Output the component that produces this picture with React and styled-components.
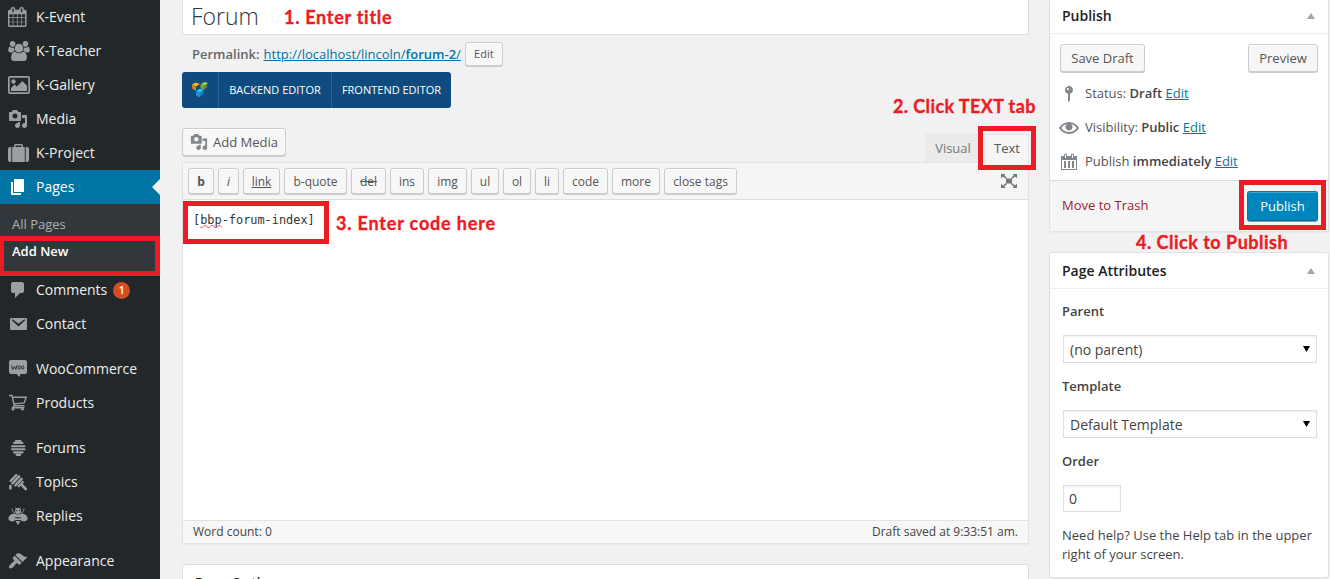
import React from 'react';
import styled, { createGlobalStyle, css } from 'styled-components';

const Global = createGlobalStyle`
  *, *::before, *::after { box-sizing: border-box; }
  html, body { margin: 0; padding: 0; background: #f1f1f1; }
  body { font: 13px/19px "Open Sans", "Noto Sans", sans-serif; color: #444; overflow: hidden; }
  p, h2, h3, ul { margin: 0; padding: 0; }
  ul { list-style: none; }
  a { color: #0074a2; }
  strong { font-weight: 600; }
`;

const Page = styled.div`
  position: relative;
  display: flex;
  width: 1330px;
  height: 579px;
  overflow: hidden;
  background: #f1f1f1;
`;

/* ---------- sidebar ---------- */
const Sidebar = styled.nav`
  flex: none;
  width: 160px;
  height: 579px;
  background: #222729;
`;
const MenuItem = styled.li`
  position: relative;
  display: flex;
  align-items: center;
  height: 34px;
  margin-top: ${p => (p.$gap ? 11 : 0)}px;
  padding-left: 8px;
  font-size: 14px;
  color: #eee;
  background: ${p => (p.$active ? '#0074a2' : 'transparent')};
  ${p => p.$active && css`
    color: #fff;
    &::after {
      content: '';
      position: absolute;
      right: 0;
      top: 9px;
      border: 8px solid transparent;
      border-left: 0;
      border-right-color: #f1f1f1;
    }
  `}
`;
const MenuLabel = styled.span`
  padding-bottom: 2px;
`;
const MenuIcon = styled.span`
  display: flex;
  align-items: center;
  width: 28px;
  color: ${p => (p.$active ? '#fff' : '#9b9fa3')};
  svg { display: block; }
`;
const Bubble = styled.span`
  width: 17px;
  height: 17px;
  margin-left: 6px;
  border-radius: 9px;
  background: #d54e21;
  color: #fff;
  font-size: 10.5px;
  font-weight: 600;
  line-height: 17px;
  text-align: center;
`;
const SubMenu = styled.ul`
  height: 69px;
  padding: 7px 12px 0;
  background: #32373b;
`;
const SubItem = styled.li`
  height: 27px;
  line-height: 26px;
  font-size: 13px;
  color: ${p => (p.$current ? '#fff' : '#aeb1b3')};
  font-weight: ${p => (p.$current ? 600 : 400)};
`;

/* ---------- shared ---------- */
const Button = styled.button`
  display: inline-flex;
  align-items: center;
  justify-content: center;
  width: ${p => p.$w}px;
  height: ${p => p.$h || 28}px;
  padding: 0 0 ${p => p.$lift || 0}px;
  border: 1px solid #ccc;
  border-radius: 3px;
  background: #f7f7f7;
  box-shadow: inset 0 1px 0 #fff, 0 1px 0 #ccc;
  color: #555;
  font: 13px "Open Sans", sans-serif;
  font-size: ${p => p.$size || 13}px;
  font-weight: ${p => (p.$bold ? 700 : 400)};
  font-style: ${p => (p.$italic ? 'italic' : 'normal')};
  text-decoration: ${p => p.$line || 'none'};
  svg { color: #82878c; }
`;
const PrimaryButton = styled(Button)`
  padding-bottom: 1px;
  border-color: #0074a2;
  border-bottom-color: #006a95;
  background: #0086bd;
  box-shadow: inset 0 1px 0 rgba(120, 200, 230, .5), 0 1px 0 rgba(0, 80, 110, .5);
  color: #fff;
`;

/* ---------- main column ---------- */
const Main = styled.main`
  flex: none;
  width: 847px;
  margin-left: 22px;
`;
const TitleBox = styled.div`
  height: 35px;
  padding-left: 8px;
  border: 1px solid #ddd;
  border-top: 0;
  background: #fff;
  color: #32373c;
  font-size: 23px;
  font-weight: 300;
  line-height: 33px;
`;
const Permalink = styled.div`
  display: flex;
  align-items: center;
  height: 26px;
  margin-top: 6px;
  padding-left: 10px;
  color: #666;
  a { margin: 0 4px; }
`;
const EditorSwitch = styled.div`
  display: flex;
  width: 269px;
  height: 36px;
  margin-top: 5px;
  border-radius: 3px;
  background: #0f4b7e;
`;
const SwitchPart = styled.div`
  display: flex;
  align-items: center;
  justify-content: center;
  width: ${p => p.$w}px;
  padding-bottom: 1px;
  border-right: ${p => (p.$last ? 0 : 1)}px solid #2b6391;
  color: #fff;
  font-size: 11px;
  white-space: nowrap;
`;
const MediaRow = styled.div`
  display: flex;
  justify-content: space-between;
  align-items: flex-start;
  height: 54px;
  padding-top: 20px;
  span { margin-left: 5px; }
`;
const Tabs = styled.div`
  display: flex;
  gap: 5px;
  margin-top: 6px;
`;
const Tab = styled.div`
  width: ${p => p.$w}px;
  height: ${p => (p.$on ? 29 : 28)}px;
  border: 1px solid #e5e5e5;
  border-bottom: 0;
  background: ${p => (p.$on ? '#f5f5f5' : '#ebebeb')};
  color: ${p => (p.$on ? '#555' : '#777')};
  line-height: 26px;
  text-align: center;
`;
const Editor = styled.section`
  display: flex;
  flex-direction: column;
  height: 382px;
  border: 1px solid #e2e2e2;
  box-shadow: 0 1px 1px rgba(0, 0, 0, .04);
  background: #fff;
`;
const Toolbar = styled.div`
  display: flex;
  gap: 4px;
  height: 37px;
  padding: 5px 10px 0 5px;
  border-bottom: 1px solid #ddd;
  background: #f5f5f5;
  svg { margin: 5px 0 0 auto; }
`;
const Code = styled.div`
  flex: 1;
  padding: 11px 10px;
  color: #333;
  font: 11.9px/19px "DejaVu Sans Mono", monospace;
  span { text-decoration: underline wavy #e8464b 1px; text-underline-offset: 0; text-decoration-skip-ink: none; }
`;
const StatusBar = styled.div`
  display: flex;
  justify-content: space-between;
  height: 23px;
  padding: 0 10px;
  border-top: 1px solid #e2e2e2;
  background: #f7f7f7;
  font-size: 12px;
  line-height: 22px;
`;
const LowerBox = styled.section`
  height: 60px;
  margin-top: 20px;
  padding: 8px 12px;
  border: 1px solid #ddd;
  border-radius: 3px 3px 0 0;
  background: #fff;
  color: #222;
  font-size: 14px;
  font-weight: 600;
`;

/* ---------- right column ---------- */
const Side = styled.aside`
  flex: none;
  width: 280px;
  margin-left: 20px;
`;
const Card = styled.section`
  height: ${p => p.$h}px;
  margin-bottom: 20px;
  border: 1px solid #e2e2e2;
  border-top-width: ${p => (p.$cut ? 0 : 1)}px;
  border-radius: ${p => (p.$cut ? '0 0 3px 3px' : '3px')};
  background: #fff;
  box-shadow: 0 1px 1px rgba(0, 0, 0, .04);
  overflow: hidden;
`;
const CardHead = styled.h3`
  display: flex;
  align-items: center;
  justify-content: space-between;
  height: ${p => p.$h}px;
  padding: 0 13px 0 12px;
  padding-bottom: ${p => p.$lift || 0}px;
  border-bottom: 1px solid #eee;
  color: #222;
  font-size: 14px;
  font-weight: 600;
`;
const Caret = styled.i`
  border: 4px solid transparent;
  border-top: 0;
  border-bottom: 6px solid #a0a5aa;
`;
const PublishBody = styled.div`
  height: 146px;
  padding: 10px 10px 0;
`;
const ButtonRow = styled.div`
  display: flex;
  justify-content: space-between;
  height: 32px;
`;
const StatusRow = styled.div`
  display: flex;
  align-items: center;
  height: 34px;
  color: #555;
  svg { flex: none; margin: 1px 6px 0 -1px; color: #82878c; }
  strong { color: #444; }
`;
const PublishFoot = styled.div`
  display: flex;
  align-items: flex-start;
  justify-content: space-between;
  height: 51px;
  padding: 10px 10px 0 12px;
  border-top: 1px solid #ddd;
  background: #f5f5f5;
`;
const Trash = styled.span`
  color: #a0202a;
  line-height: 28px;
`;
const Attributes = styled.div`
  padding: 0 12px;
`;
const Label = styled.div`
  height: 46px;
  padding-top: 13px;
  font-weight: 600;
  line-height: 19px;
`;
const Field = styled.div`
  display: flex;
  align-items: center;
  justify-content: space-between;
  width: ${p => p.$w}px;
  height: ${p => p.$h || 28}px;
  margin: 0 0 ${p => (p.$h ? 14 : 1)}px 1px;
  padding: 0 6px 0 ${p => (p.$h ? 5 : 6)}px;
  border: 1px solid #ddd;
  box-shadow: inset 0 1px 2px rgba(0, 0, 0, .07);
  color: #444;
  font-size: 14px;
`;

/* ---------- tutorial marks ---------- */
const Frame = styled.div`
  position: absolute;
  left: ${p => p.$x}px;
  top: ${p => p.$y}px;
  width: ${p => p.$w}px;
  height: ${p => p.$h}px;
  border: 5px solid #ed1c24;
  border-left-width: ${p => p.$l || 5}px;
`;
const Note = styled.div`
  position: absolute;
  left: ${p => p.$x}px;
  top: ${p => p.$y}px;
  color: #ed1c24;
  font: 700 18px/24px Lato, "Open Sans", sans-serif;
  letter-spacing: ${p => p.$track}px;
  -webkit-text-stroke: .35px #ed1c24;
  white-space: nowrap;
`;

/* ---------- icons ---------- */
const Glyph = ({ d, size = 20, w, box = '0 0 20 20', children }) => (
  <svg width={w || size} height={size} viewBox={box} fill="currentColor" fillRule="evenodd">
    {d && <path d={d} />}
    {children}
  </svg>
);
const paths = {
  calendar: 'M192 1664h288v-288h-288v288zm352 0h320v-288h-320v288zm-352-352h288v-320h-288v320zm352 0h320v-320h-320v320zm-352-384h288v-288h-288v288zm736 736h320v-288h-320v288zm-384-736h320v-288h-320v288zm768 736h288v-288h-288v288zm-384-352h320v-320h-320v320zm-352-864v-288q0-13-9.5-22.5t-22.5-9.5h-64q-13 0-22.5 9.5t-9.5 22.5v288q0 13 9.5 22.5t22.5 9.5h64q13 0 22.5-9.5t9.5-22.5zm736 864h288v-320h-288v320zm-384-384h320v-288h-320v288zm384 0h288v-288h-288v288zm32-480v-288q0-13-9.5-22.5t-22.5-9.5h-64q-13 0-22.5 9.5t-9.5 22.5v288q0 13 9.5 22.5t22.5 9.5h64q13 0 22.5-9.5t9.5-22.5zm384-64v1280q0 52-38 90t-90 38h-1408q-52 0-90-38t-38-90v-1280q0-52 38-90t90-38h128v-96q0-66 47-113t113-47h64q66 0 113 47t47 113v96h384v-96q0-66 47-113t113-47h64q66 0 113 47t47 113v96h128q52 0 90 38t38 90z',
  users: 'M657 896q-162 5-265 128h-134q-82 0-138-40.5t-56-118.5q0-353 124-353 6 0 43.5 21t97.5 42.5 119 21.5q67 0 133-23-5 37-5 66 0 139 81 256zm1071 637q0 120-73 189.5t-194 69.5h-874q-121 0-194-69.5t-73-189.5q0-53 3.5-103.5t14-109 26.5-108.5 43-97.5 62-81 85.5-53.5 111.5-20q10 0 43 21.5t73 48 107 48 135 21.5 135-21.5 107-48 73-48 43-21.5q61 0 111.5 20t85.5 53.5 62 81 43 97.5 26.5 108.5 14 109 3.5 103.5zm-1024-1277q0 106-75 181t-181 75-181-75-75-181 75-181 181-75 181 75 75 181zm704 384q0 159-112.5 271.5t-271.5 112.5-271.5-112.5-112.5-271.5 112.5-271.5 271.5-112.5 271.5 112.5 112.5 271.5zm576 225q0 78-56 118.5t-138 40.5h-134q-103-123-265-128 81-117 81-256 0-29-5-66 66 23 133 23 59 0 119-21.5t97.5-42.5 43.5-21q124 0 124 353zm-128-609q0 106-75 181t-181 75-181-75-75-181 75-181 181-75 181 75 75 181z',
  media: 'M13 11V4c0-.55-.45-1-1-1h-1.67L9 1H5L3.67 3H2c-.55 0-1 .45-1 1v7c0 .55.45 1 1 1h10c.55 0 1-.45 1-1zM7 4.5c1.38 0 2.5 1.12 2.5 2.5S8.38 9.5 7 9.5 4.5 8.38 4.5 7 5.62 4.5 7 4.5zM14 6h5v10.5c0 1.38-1.12 2.5-2.5 2.5S14 17.88 14 16.5s1.12-2.5 2.5-2.5c.17 0 .34.02.5.05V9h-3V6zm-4 8.05V13h2v3.5c0 1.38-1.12 2.5-2.5 2.5S7 17.88 7 16.5 8.12 14 9.5 14c.17 0 .34.02.5.05z',
  page: 'M6 15V2h10v13H6zm-1 1h8v2H3V5h2v11z',
  comment: 'M5 2h9c1.1 0 2 .9 2 2v7c0 1.1-.9 2-2 2h-2l-5 5v-5H5c-1.1 0-2-.9-2-2V4c0-1.1.9-2 2-2z',
  brush: 'M14.48 11.06L7.41 3.99l1.5-1.5c.5-.56 2.3-.47 3.51.32 1.21.8 1.43 1.28 2.91 2.1 1.18.64 2.45 1.26 4.45.85zm-.71.71L6.7 4.7 4.93 6.47c-.39.39-.39 1.02 0 1.41l1.06 1.06c.39.39.39 1.03 0 1.42-.6.6-1.43 1.11-2.21 1.69-.35.26-.7.53-1.01.84C1.43 14.23.4 16.08 1.4 17.07c.99 1 2.84-.03 4.18-1.36.31-.31.58-.66.85-1.02.57-.78 1.08-1.61 1.69-2.21.39-.39 1.02-.39 1.41 0l1.06 1.06c.39.39 1.02.39 1.41 0z',
  eye: 'M19.7 9.4C17.7 6 14 3.9 10 3.9S2.3 6 .3 9.4L0 10l.3.6c2 3.4 5.7 5.5 9.7 5.5s7.7-2.1 9.7-5.5l.3-.6-.3-.6zM10 14.1c-3.1 0-6-1.6-7.7-4.1C3.6 8 5.7 6.6 8 6.1c-.9.6-1.5 1.7-1.5 2.9 0 1.9 1.6 3.5 3.5 3.5s3.5-1.6 3.5-3.5c0-1.2-.6-2.3-1.5-2.9 2.3.5 4.4 1.9 5.7 3.9-1.7 2.5-4.6 4.1-7.7 4.1z',
  pin: 'M14 6c0 1.86-1.28 3.41-3 3.86V16c0 1-2 2-2 2V9.86c-1.72-.45-3-2-3-3.86 0-2.21 1.79-4 4-4s4 1.79 4 4zM8 5c0 .55.45 1 1 1s1-.45 1-1-.45-1-1-1-1 .45-1 1z',
  schedule: 'M15 4h3v14H2V4h3V3c0-.83.67-1.5 1.5-1.5S8 2.17 8 3v1h4V3c0-.83.67-1.5 1.5-1.5S15 2.17 15 3v1zM6 3v2.5c0 .28.22.5.5.5s.5-.22.5-.5V3c0-.28-.22-.5-.5-.5S6 2.72 6 3zm7 0v2.5c0 .28.22.5.5.5s.5-.22.5-.5V3c0-.28-.22-.5-.5-.5s-.5.22-.5.5zm4 14V8H3v9h14zM7 16V9H5v7h2zm4 0V9H9v7h2zm4 0V9h-2v7h2z',
};

const icons = {
  event: <Glyph d={paths.calendar} size={20} box="64 0 1792 1792" />,
  teacher: <Glyph d={paths.users} size={20} w={22} box="64 0 1920 1792" />,
  gallery: (
    <Glyph size={18} w={22} box="0 0 22 18">
      <path d="M2 0h18a2 2 0 0 1 2 2v14a2 2 0 0 1-2 2H2a2 2 0 0 1-2-2V2a2 2 0 0 1 2-2zM1.700 1.700v14.600h18.600V1.700z" />
      <circle cx="5.500" cy="5.500" r="2.200" />
      <path d="M3 15v-3l3.600-3.600 2.200 2.200L14.500 5l4.500 4.800V15z" />
    </Glyph>
  ),
  media: <Glyph d={paths.media} />,
  project: (
    <Glyph size={18} w={21} box="0 0 21 18">
      <path d="M2 3h1.300v15H2a2 2 0 0 1-2-2V5a2 2 0 0 1 2-2zM4.200 3H6V1.500A1.500 1.500 0 0 1 7.500 0h6A1.500 1.500 0 0 1 15 1.500V3h1.800v15H4.200zM7.500 1.500V3h6V1.500zM17.700 3H19a2 2 0 0 1 2 2v11a2 2 0 0 1-2 2h-1.300z" />
    </Glyph>
  ),
  pages: <Glyph d={paths.page} />,
  comments: <Glyph d={paths.comment} />,
  contact: (
    <Glyph>
      <path d="M3 4h15a1 1 0 0 1 1 1v10a1 1 0 0 1-1 1H3a1 1 0 0 1-1-1V5a1 1 0 0 1 1-1zM3.600 6l6.900 6.400L17.400 6l-1-.8-5.900 4.600-5.900-4.600z" />
    </Glyph>
  ),
  woo: (
    <Glyph>
      <path d="M3 1h14a2 2 0 0 1 2 2v10a2 2 0 0 1-2 2h-4.500l-1 3-3-3H3a2 2 0 0 1-2-2V3a2 2 0 0 1 2-2z" />
      <g fill="none" stroke="#222729" strokeWidth=".9">
        <path d="M3.700 6.500l1 4L6.500 7.500l1.300 3L9 6" />
        <ellipse cx="11.200" cy="8.500" rx="1.100" ry="1.700" />
        <ellipse cx="14.700" cy="8.500" rx="1.100" ry="1.700" />
      </g>
    </Glyph>
  ),
  products: (
    <Glyph>
      <path d="M1 2.500h3l2.300 10.300h10.200M4.600 4.300h13.600l-2 5.600-10.200 1M6.300 12.800l-1.800 2h12" fill="none" stroke="currentColor" strokeWidth="1.400" />
      <circle cx="5" cy="16.300" r="1.300" />
      <circle cx="14.500" cy="16.300" r="1.300" />
    </Glyph>
  ),
  forums: (
    <Glyph>
      <rect x="7" y="2" width="6.500" height="2.500" rx="1" />
      <rect x="5" y="3.800" width="10.500" height="2.200" rx="1" />
      <rect x="3" y="7.200" width="14.500" height="2" rx="1" />
      <rect x="3" y="10.300" width="14.500" height="2" rx="1" />
      <rect x="5" y="13.300" width="10.500" height="2.200" rx="1" />
      <rect x="7.500" y="15.400" width="5.500" height="2.600" rx="1" />
    </Glyph>
  ),
  topics: (
    <Glyph>
      <g stroke="currentColor" strokeLinecap="round" fill="none">
        <path d="M2.600 9L8.300 3" strokeWidth="2.400" />
        <path d="M4.500 11.300L11 4.500" strokeWidth="2.600" />
        <path d="M7.500 13.300L13.500 7" strokeWidth="2.600" />
        <path d="M10.800 14.300L14.800 10" strokeWidth="2.200" />
        <path d="M14 13L17.700 17" strokeWidth="2.800" />
        <path d="M2.400 14v2.500" strokeWidth="2.600" />
      </g>
    </Glyph>
  ),
  replies: (
    <Glyph>
      <path d="M7.500 1.500C8 3 8.500 3 10 3s2-.0 2.500-1.500M4 2.500c0 3 2 4 3 4.500M16 2.500c0 3-2 4-3 4.500" fill="none" stroke="currentColor" strokeWidth="1" />
      <circle cx="10" cy="5" r="3" />
      <ellipse cx="5" cy="11.500" rx="4.800" ry="3.600" transform="rotate(-28 5 11.500)" />
      <ellipse cx="15" cy="11.500" rx="4.800" ry="3.600" transform="rotate(28 15 11.500)" />
      <path d="M6.500 8.500h7v2.500h-7zM7 12.300h6v1.600H7zM7.500 15h5L10 19z" />
      <path d="M6.800 11.700h6.400M7 14.500h6" stroke="#222729" strokeWidth=".8" />
      <circle cx="8.700" cy="4.600" r=".7" fill="#222729" />
      <circle cx="11.300" cy="4.600" r=".7" fill="#222729" />
    </Glyph>
  ),
  appearance: <Glyph d={paths.brush} />,
};

const ComposerLogo = () => (
  <svg width="18" height="18" viewBox="0 0 18 18">
    <path d="M1 3.500l3.500-2L9 3 5 5.500z" fill="#f9b418" />
    <path d="M1 3.500l4 2V10L1 7.500z" fill="#c98a13" />
    <path d="M10 3l4-2 3 1.300-4 2.700z" fill="#a5cf4c" />
    <path d="M9.500 3l3.500 2v4l-3.500-2z" fill="#7fa33a" />
    <path d="M13 5l3-2v3.500l-3 2.500z" fill="#5c8a35" />
    <path d="M5 10l4-2.500 3.500 1.500L9 12z" fill="#2fc0f0" />
    <path d="M5 10l4 2v4.500l-4-2z" fill="#1796d4" />
    <path d="M9 12l3.500-3v4L9 16z" fill="#1180bb" />
  </svg>
);

const Expand = () => (
  <svg width="18" height="16" viewBox="0 0 18 16" fill="#72777c">
    <rect x="6" y="5.500" width="6" height="5" />
    <path d="M1 1h4.500L4.200 2.300 7 5 6 6 3 3.400 1 5.200zM17 1h-4.500l1.300 1.300L11 5l1 1 3-2.600 2 1.800zM1 15h4.500l-1.300-1.300L7 11l-1-1-3 2.600-2-1.800zM17 15h-4.500l1.300-1.300L11 11l1-1 3 2.600 2-1.800z" />
  </svg>
);

const menuTop = [['event', 'K-Event'], ['teacher', 'K-Teacher'], ['gallery', 'K-Gallery'], ['media', 'Media'], ['project', 'K-Project'], ['pages', 'Pages', { active: true }]];
const menuBottom = [
  ['comments', 'Comments', { count: 1 }], ['contact', 'Contact'],
  ['woo', 'WooCommerce', { gap: true }], ['products', 'Products'],
  ['forums', 'Forums', { gap: true }], ['topics', 'Topics'], ['replies', 'Replies'],
  ['appearance', 'Appearance', { gap: true }],
];
const MenuRow = ({ icon, label, active, gap, count }) => (
  <MenuItem $active={active} $gap={gap}>
    <MenuIcon $active={active}>{icons[icon]}</MenuIcon>
    <MenuLabel>{label}</MenuLabel>
    {count && <Bubble>{count}</Bubble>}
  </MenuItem>
);

const tags = [
  { t: 'b', w: 26, bold: true }, { t: 'i', w: 21, italic: true }, { t: 'link', w: 37, line: 'underline' },
  { t: 'b-quote', w: 63 }, { t: 'del', w: 35, line: 'line-through' }, { t: 'ins', w: 34 }, { t: 'img', w: 39 },
  { t: 'ul', w: 28 }, { t: 'ol', w: 28 }, { t: 'li', w: 24 }, { t: 'code', w: 45 }, { t: 'more', w: 48 }, { t: 'close tags', w: 73 },
];

const Arrow = () => (
  <svg width="7" height="7" viewBox="0 0 7 7"><path d="M0 0h7L3.500 6z" fill="#000" /></svg>
);

export default function App() {
  return (
    <Page>
      <Global />
      <Sidebar>
        <ul>{menuTop.map(([i, l, o]) => <MenuRow key={l} icon={i} label={l} {...o} />)}</ul>
        <SubMenu>
          <SubItem>All Pages</SubItem>
          <SubItem $current>Add New</SubItem>
        </SubMenu>
        <ul>{menuBottom.map(([i, l, o]) => <MenuRow key={l} icon={i} label={l} {...o} />)}</ul>
      </Sidebar>

      <Main>
        <TitleBox>Forum</TitleBox>
        <Permalink>
          <strong>Permalink:</strong>
          <a>
            <u>http://localhost/lincoln/<strong>forum-2</strong>/</u>
          </a>
          <Button $w={38} $h={24} $size={11} $lift={2}>Edit</Button>
        </Permalink>
        <EditorSwitch>
          <SwitchPart $w={37}><ComposerLogo /></SwitchPart>
          <SwitchPart $w={113}>BACKEND EDITOR</SwitchPart>
          <SwitchPart $w={119} $last>FRONTEND EDITOR</SwitchPart>
        </EditorSwitch>
        <MediaRow>
          <Button $w={104}>
            <Glyph d={paths.media} size={18} />
            <span>Add Media</span>
          </Button>
          <Tabs>
            <Tab $w={54}>Visual</Tab>
            <Tab $w={44} $on>Text</Tab>
          </Tabs>
        </MediaRow>
        <Editor>
          <Toolbar>
            {tags.map(({ t, w, bold, italic, line }) => (
              <Button key={t} $w={w} $h={26} $size={12} $bold={bold} $italic={italic} $line={line}>{t}</Button>
            ))}
            <Expand />
          </Toolbar>
          <Code>[<span>bbp</span>-forum-index]</Code>
          <StatusBar>
            <div>Word count: 0</div>
            <div>Draft saved at 9:33:51 am.</div>
          </StatusBar>
        </Editor>
        <LowerBox>Page Options</LowerBox>
      </Main>

      <Side>
        <Card $h={232} $cut>
          <CardHead $h={34} $lift={2}>Publish<Caret /></CardHead>
          <PublishBody>
            <ButtonRow>
              <Button $w={85}>Save Draft</Button>
              <Button $w={70}>Preview</Button>
            </ButtonRow>
            <StatusRow><Glyph d={paths.pin} /><span>Status: <strong>Draft</strong> <a><u>Edit</u></a></span></StatusRow>
            <StatusRow><Glyph d={paths.eye} /><span>Visibility: <strong>Public</strong> <a><u>Edit</u></a></span></StatusRow>
            <StatusRow><Glyph d={paths.schedule} /><span>Publish <strong>immediately</strong> <a><u>Edit</u></a></span></StatusRow>
          </PublishBody>
          <PublishFoot>
            <Trash>Move to Trash</Trash>
            <PrimaryButton $w={71} $h={30}>Publish</PrimaryButton>
          </PublishFoot>
        </Card>
        <Card $h={326}>
          <CardHead $h={36}>Page Attributes<Caret /></CardHead>
          <Attributes>
            <Label>Parent</Label>
            <Field $w={254}>(no parent)<Arrow /></Field>
            <Label>Template</Label>
            <Field $w={254}>Default Template<Arrow /></Field>
            <Label>Order</Label>
            <Field $w={58} $h={27}>0</Field>
            <p>Need help? Use the Help tab in the upper right of your screen.</p>
          </Attributes>
        </Card>
      </Side>

      <Frame $x={0} $y={236} $w={160} $h={40} $l={4} />
      <Frame $x={978} $y={126} $w={58} $h={44} />
      <Frame $x={183} $y={201} $w={146} $h={43} />
      <Frame $x={1239} $y={180} $w={87} $h={50} />
      <Note $x={284} $y={5} $track={0.72}>1. Enter title</Note>
      <Note $x={893} $y={94} $track={0.4}>2. Click TEXT tab</Note>
      <Note $x={336} $y={211} $track={0.82}>3. Enter code here</Note>
      <Note $x={1136} $y={230} $track={0.5}>4. Click to Publish</Note>
    </Page>
  );
}
